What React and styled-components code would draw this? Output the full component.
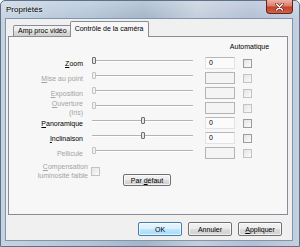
import React from "react";
import styled, { createGlobalStyle } from "styled-components";

const GlobalStyle = createGlobalStyle`
  html, body {
    margin: 0;
    padding: 0;
  }
  body {
    width: 300px;
    height: 247px;
    overflow: hidden;
    font-family: "Liberation Sans", Arial, sans-serif;
  }
`;

const Window = styled.div`
  width: 300px;
  height: 247px;
  box-sizing: border-box;
  display: flex;
  flex-direction: column;
  border: 1px solid #5d7189;
  border-radius: 5px 5px 0 0;
  background:
    linear-gradient(180deg, rgba(255, 255, 255, 0.25) 0%, rgba(255, 255, 255, 0) 18px),
    linear-gradient(90deg, #c6d3e1 0%, #b3c4d7 30%, #a3b5ca 48%, #c4cfdc 66%, #b2bfd6 84%, #c4d0df 100%);
`;

const TitleBar = styled.div`
  height: 17px;
  display: flex;
  align-items: flex-start;
  padding-left: 5px;
`;

const Title = styled.span`
  margin-top: 4px;
  font-size: 8px;
  line-height: 9px;
  color: #000;
  text-shadow: 0 0 3px rgba(255, 255, 255, 0.9);
`;

const CloseButton = styled.div`
  margin-left: auto;
  margin-right: 6px;
  margin-top: -1px;
  width: 27px;
  height: 14px;
  box-sizing: border-box;
  border: 1px solid #6b2217;
  border-top: none;
  border-radius: 0 0 4px 4px;
  background: linear-gradient(180deg, #eeb1a4 0%, #dc7e6c 45%, #c4402c 55%, #d0624c 100%);
  display: flex;
  align-items: center;
  justify-content: center;
`;

const Client = styled.div`
  flex: 1;
  margin: 0 6px 5px 4px;
  border: 1px solid #8195ab;
  background: #f0f0f0;
  display: flex;
  flex-direction: column;
  padding: 2px 4px 0 2px;
`;

const TabRow = styled.div`
  height: 16px;
  display: flex;
  align-items: flex-end;
  padding-left: 5px;
  margin-bottom: -1px;
`;

const Tab = styled.div`
  position: relative;
  box-sizing: border-box;
  height: ${(p) => (p.$active ? "16px" : "11px")};
  margin-bottom: ${(p) => (p.$active ? "0" : "1px")};
  margin-left: ${(p) => (p.$active ? "-2px" : "0")};
  padding: 0 4px;
  border: 1px solid #898c95;
  border-bottom: none;
  border-radius: 2px 2px 0 0;
  background: ${(p) =>
    p.$active ? "#f7f7f7" : "linear-gradient(180deg, #f3f3f3 0%, #ebebeb 50%, #dcdcdc 51%, #cfcfcf 100%)"};
  z-index: ${(p) => (p.$active ? 1 : 0)};
  font-size: 7px;
  line-height: ${(p) => (p.$active ? "14px" : "10px")};
  white-space: nowrap;
  color: #000;
`;

const Panel = styled.div`
  flex: 1;
  box-sizing: border-box;
  border: 1px solid #898c95;
  background: #f7f7f7;
  padding-top: 6px;
`;

const Grid = styled.div`
  display: grid;
  grid-template-columns: 74px 106px 30px 9px;
  column-gap: 8px;
  row-gap: 3px;
  align-items: center;
  font-size: 7px;
`;

const Header = styled.div`
  grid-column: 4;
  justify-self: center;
  white-space: nowrap;
  line-height: 8px;
  margin-bottom: 3px;
  margin-left: 4px;
  color: #000;
`;

const Label = styled.div`
  grid-column: 1;
  height: ${(p) => (p.$tall ? "18px" : "12px")};
  margin-right: ${(p) => (p.$tall ? "-5px" : "0")};
  display: flex;
  flex-direction: column;
  justify-content: center;
  align-items: flex-end;
  text-align: right;
  line-height: 9px;
  white-space: nowrap;
  color: ${(p) => (p.$disabled ? "#a3a3a3" : "#000")};
`;

const Slider = styled.div`
  position: relative;
  height: 12px;
`;

const Track = styled.div`
  position: absolute;
  left: 1px;
  top: 3px;
  width: 101px;
  height: 0;
  border-top: 1px solid #b3b3b3;
  border-bottom: 1px solid #ffffff;
`;

const Thumb = styled.div`
  position: absolute;
  top: 0;
  width: 4px;
  height: 7px;
  box-sizing: border-box;
  border: 1px solid ${(p) => (p.$disabled ? "#c2c2c2" : "#6f6f6f")};
  border-radius: 1px;
  background: ${(p) => (p.$disabled ? "#f2f2f2" : "#e6e6e6")};
`;

const Field = styled.div`
  height: 12px;
  box-sizing: border-box;
  padding-left: 3px;
  font-size: 7px;
  line-height: 10px;
  color: #000;
  border: 1px solid ${(p) => (p.$disabled ? "#b4b4b4" : "#e1e3e6")};
  border-top-color: ${(p) => (p.$disabled ? "#b4b4b4" : "#b5b8bd")};
  background: ${(p) => (p.$disabled ? "#f4f4f4" : "#fbfbfb")};
`;

const Check = styled.div`
  grid-column: ${(p) => p.$col || 4};
  justify-self: start;
  width: 9px;
  height: 9px;
  box-sizing: border-box;
  border: 1px solid ${(p) => (p.$disabled ? "#c3c3c3" : "#9c9c9c")};
  background: linear-gradient(135deg, #e4e4e4 0%, #fbfbfb 100%);
`;

const PushButton = styled.div`
  box-sizing: border-box;
  width: ${(p) => p.$width || 44}px;
  height: ${(p) => p.$height || 14}px;
  border: 1px solid ${(p) => (p.$default ? "#3c7fb1" : "#707070")};
  border-radius: 2px;
  background: ${(p) =>
    p.$default
      ? "linear-gradient(180deg, #eaf6fd 0%, #d9f0fc 50%, #bee6fd 51%, #a7d9f5 100%)"
      : "linear-gradient(180deg, #f2f2f2 0%, #ebebeb 50%, #dddddd 51%, #cfcfcf 100%)"};
  box-shadow: inset 0 0 0 1px rgba(255, 255, 255, 0.7);
  display: flex;
  align-items: center;
  justify-content: center;
  font-size: 7px;
  color: #000;
  white-space: nowrap;
`;

const DefaultsButton = styled(PushButton)`
  grid-column: 2;
  justify-self: start;
  margin-left: 32px;
  margin-top: -9px;
`;

const ButtonRow = styled.div`
  display: flex;
  justify-content: flex-end;
  gap: 6px;
  margin: 7px 0 4px;
  padding-right: 6px;
`;

const rows = [
  { key: "Z", rest: "oom", value: "0", pos: 0 },
  { key: "M", rest: "ise au point", disabled: true, pos: 0 },
  { key: "E", rest: "xposition", disabled: true, pos: 0 },
  { key: "O", rest: "uverture", extra: "(Iris)", disabled: true, pos: 0 },
  { key: "P", rest: "anoramique", value: "0", pos: 0.5 },
  { key: "I", rest: "nclinaison", value: "0", pos: 0.5 },
  { key: "", rest: "Pellicule", disabled: true, pos: 0 },
];

const CloseGlyph = () => (
  <svg width="9" height="8" viewBox="0 0 9 8">
    <path d="M1.5 1 L7.5 7 M7.5 1 L1.5 7" stroke="#5a1a10" strokeWidth="2.6" strokeLinecap="round" />
    <path d="M1.5 1 L7.5 7 M7.5 1 L1.5 7" stroke="#ffffff" strokeWidth="1.5" strokeLinecap="round" />
  </svg>
);

export default function App() {
  return (
    <>
      <GlobalStyle />
      <Window>
        <TitleBar>
          <Title>Propriétés</Title>
          <CloseButton>
            <CloseGlyph />
          </CloseButton>
        </TitleBar>
        <Client>
          <TabRow>
            <Tab>Amp proc vidéo</Tab>
            <Tab $active>Contrôle de la caméra</Tab>
          </TabRow>
          <Panel>
            <Grid>
              <Header>Automatique</Header>
              {rows.map((r) => (
                <React.Fragment key={r.rest}>
                  <Label $disabled={r.disabled}>
                    <span>
                      {r.key && <u>{r.key}</u>}
                      {r.rest}
                    </span>
                    {r.extra && <span>{r.extra}</span>}
                  </Label>
                  <Slider>
                    <Track />
                    <Thumb
                      $disabled={r.disabled}
                      style={{ left: `${1 + r.pos * 97}px` }}
                    />
                  </Slider>
                  <Field $disabled={r.disabled}>{r.value}</Field>
                  <Check $disabled={r.disabled} />
                </React.Fragment>
              ))}
              <Label $tall $disabled>
                <span>
                  <u>C</u>ompensation
                </span>
                <span>luminosité faible</span>
              </Label>
              <Check $col={2} $disabled />
              <DefaultsButton $width={48} $height={12}>
                <span>
                  Par <u>d</u>éfaut
                </span>
              </DefaultsButton>
            </Grid>
          </Panel>
          <ButtonRow>
            <PushButton $default>OK</PushButton>
            <PushButton>Annuler</PushButton>
            <PushButton>
              <span>
                <u>A</u>ppliquer
              </span>
            </PushButton>
          </ButtonRow>
        </Client>
      </Window>
    </>
  );
}
